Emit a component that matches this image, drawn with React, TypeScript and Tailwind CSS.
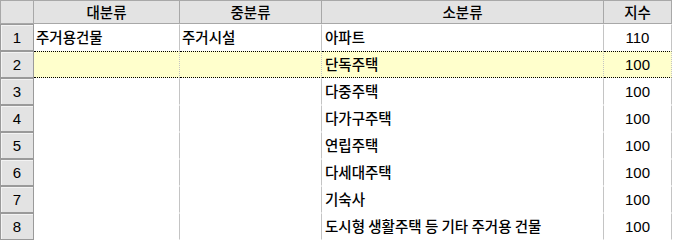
const rows = [
  { n: 1, a: "주거용건물", b: "주거시설", c: "아파트", v: "110" },
  { n: 2, a: "", b: "", c: "단독주택", v: "100" },
  { n: 3, a: "", b: "", c: "다중주택", v: "100" },
  { n: 4, a: "", b: "", c: "다가구주택", v: "100" },
  { n: 5, a: "", b: "", c: "연립주택", v: "100" },
  { n: 6, a: "", b: "", c: "다세대주택", v: "100" },
  { n: 7, a: "", b: "", c: "기숙사", v: "100" },
  { n: 8, a: "", b: "", c: "도시형 생활주택 등 기타 주거용 건물", v: "100" },
];

const kr = "font-['Malgun_Gothic','Noto_Sans_CJK_KR',sans-serif]";
const num = "font-['Liberation_Sans','Noto_Sans_CJK_KR',sans-serif]";

export default function App() {
  return (
    <div className={`w-[674px] h-[240px] bg-white overflow-hidden text-black ${kr}`}>
      {/* header */}
      <div className="flex h-[24px]">
        <div className="grid grid-cols-[34px_146px_142px_282px_68px] h-[24px] bg-[#e3e3e3] border-y border-[#a8a8a8] text-[14.5px] font-medium leading-none">
          <div className="border-x border-[#a8a8a8]" />
          <div className="flex items-center justify-center border-r border-[#a8a8a8]">대분류</div>
          <div className="flex items-center justify-center border-r border-[#a8a8a8]">중분류</div>
          <div className="flex items-center justify-center border-r border-[#a8a8a8]">소분류</div>
          <div className="flex items-center justify-center border-r border-[#a8a8a8]">지수</div>
        </div>
        <div className="w-[2px] bg-white" />
      </div>

      {/* body */}
      {rows.map((r) => {
        const sel = r.n === 2;
        const cell = sel
          ? "bg-[#ffffcc] border-y border-dotted border-y-black"
          : "bg-white border-y border-transparent";
        return (
          <div key={r.n} className="grid grid-cols-[34px_146px_142px_282px_68px] h-[27px] text-[14.5px] font-medium leading-none">
            <div className={`flex items-center justify-center bg-[#e3e3e3] border border-[#9a9a9a] shadow-[inset_1px_1px_0_#f4f4f4] text-[15px] font-normal ${num}`}>
              {r.n}
            </div>
            <div className={`flex items-center pl-[2px] border-r border-r-[#c4c4c4] ${cell}`}>{r.a}</div>
            <div className={`flex items-center pl-[2px] border-r border-r-[#c4c4c4] ${cell}`}>{r.b}</div>
            <div className={`flex items-center pl-[3px] border-r border-r-[#c4c4c4] ${cell}`}>{r.c}</div>
            <div className={`flex items-center justify-center text-[15px] font-normal border-r border-r-[#c4c4c4] ${num} ${cell}`}>{r.v}</div>
          </div>
        );
      })}
      <div className="w-[672px] h-px bg-[#d8d8d8]" />
    </div>
  );
}
